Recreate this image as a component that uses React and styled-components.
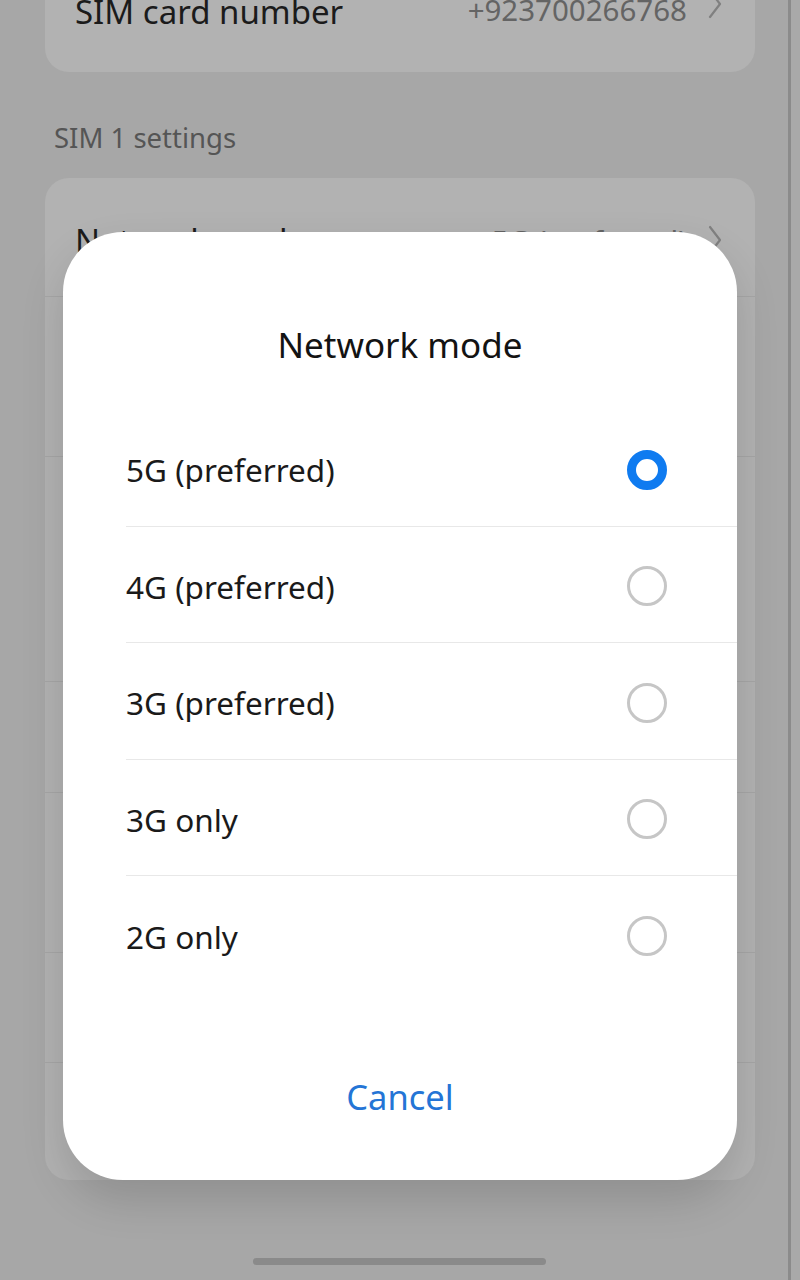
import React from 'react';
import styled, { createGlobalStyle } from 'styled-components';

const GlobalStyle = createGlobalStyle`
  html, body {
    margin: 0;
    padding: 0;
    background: #a7a7a7;
  }
  body {
    font-family: "Noto Sans", "Open Sans", sans-serif;
  }
`;

const Screen = styled.div`
  position: relative;
  width: 800px;
  height: 1280px;
  overflow: hidden;
  background: #a7a7a7;
  display: flex;
`;

const Content = styled.div`
  width: 788px;
  padding: 0 33px 0 45px;
  box-sizing: border-box;
  display: flex;
  flex-direction: column;
  margin-top: -48px;
`;

const ScrollTrack = styled.div`
  width: 3px;
  background: #8b8b8b;
`;

const ScrollEdge = styled.div`
  flex: 1;
  background: #a9a9a9;
`;

const Card = styled.div`
  background: #b2b2b2;
  border-radius: 24px;
  overflow: hidden;
`;

const Row = styled.div`
  height: ${props => props.height}px;
  display: flex;
  align-items: ${props => props.align || 'center'};
  padding: ${props => props.pad || '0'} 32px 0 30px;
  box-sizing: border-box;
  border-bottom: ${props => props.last ? 'none' : '1px solid #a6a6a6'};
`;

const RowLabel = styled.div`
  flex: 1;
  font-size: 33px;
  color: #1b1b1b;
  white-space: nowrap;
`;

const RowValue = styled.div`
  font-size: 29.5px;
  color: #646464;
  white-space: nowrap;
`;

const Chevron = styled.svg`
  width: 16px;
  height: 30px;
  margin-left: 20px;
  flex-shrink: 0;
`;

const SectionTitle = styled.div`
  font-size: 27.5px;
  color: #555;
  padding: 47px 0 22px 9px;
`;

const Backdrop = styled.div`
  position: absolute;
  inset: 0;
`;

const Dialog = styled.div`
  position: absolute;
  left: 63px;
  top: 232px;
  width: 674px;
  height: 948px;
  background: #fff;
  border-radius: 60px;
  box-shadow: 0 20px 44px rgba(0, 0, 0, 0.14);
  display: flex;
  flex-direction: column;
`;

const DialogTitle = styled.div`
  font-size: 35px;
  color: #131313;
  text-align: center;
  padding-top: 89px;
  height: 178px;
  box-sizing: border-box;
`;

const OptionList = styled.div`
  display: flex;
  flex-direction: column;
  padding-left: 63px;
`;

const Option = styled.div`
  height: 116.5px;
  display: flex;
  align-items: center;
  padding: 4px 70px 0 0;
  box-sizing: border-box;
  border-bottom: ${props => props.last ? 'none' : '1px solid #e8e8e8'};
`;

const OptionLabel = styled.div`
  flex: 1;
  font-size: 31.5px;
  color: #1a1a1a;
`;

const Radio = styled.div`
  width: 40px;
  height: 40px;
  box-sizing: border-box;
  border-radius: 50%;
  border: ${props => props.checked ? '9px solid #0f7bf0' : '3px solid #c6c6c6'};
  background: #fff;
`;

const CancelButton = styled.div`
  margin-top: auto;
  margin-bottom: 60px;
  text-align: center;
  font-size: 34.5px;
  color: #2475d6;
`;

const HomeBar = styled.div`
  position: absolute;
  left: 253px;
  bottom: 15px;
  width: 293px;
  height: 7px;
  border-radius: 4px;
  background: #8a8a8a;
`;

const options = ['5G (preferred)', '4G (preferred)', '3G (preferred)', '3G only', '2G only'];

const simRows = [
  { label: 'Network mode', value: '5G (preferred)', height: 119 },
  { label: 'Preferred network for calls', height: 160 },
  { label: 'Data roaming', height: 225 },
  { label: 'Access point names', height: 111 },
  { label: 'Enhanced 4G LTE mode', height: 160 },
  { label: 'VoWiFi', height: 110 },
  { label: 'Carrier settings', height: 117, last: true },
];

const ChevronIcon = () => (
  <Chevron viewBox="0 0 16 30">
    <path d="M3 2 L13 15 L3 28" fill="none" stroke="#808080" strokeWidth="2.2" strokeLinecap="round" strokeLinejoin="round" />
  </Chevron>
);

export default function App() {
  return (
    <>
      <GlobalStyle />
      <Screen>
        <Content>
          <Card>
            <Row height={120} align="flex-start" pad="37px" last>
              <RowLabel>SIM card number</RowLabel>
              <RowValue>+923700266768</RowValue>
              <ChevronIcon />
            </Row>
          </Card>
          <SectionTitle>SIM 1 settings</SectionTitle>
          <Card>
            {simRows.map(row => (
              <Row key={row.label} height={row.height} last={row.last} pad={row.value ? '6px' : '0'}>
                <RowLabel>{row.label}</RowLabel>
                {row.value && <RowValue>{row.value}</RowValue>}
                <ChevronIcon />
              </Row>
            ))}
          </Card>
        </Content>
        <ScrollTrack />
        <ScrollEdge />
        <Backdrop>
          <Dialog>
            <DialogTitle>Network mode</DialogTitle>
            <OptionList>
              {options.map((opt, i) => (
                <Option key={opt} last={i === options.length - 1}>
                  <OptionLabel>{opt}</OptionLabel>
                  <Radio checked={i === 0} />
                </Option>
              ))}
            </OptionList>
            <CancelButton>Cancel</CancelButton>
          </Dialog>
          <HomeBar />
        </Backdrop>
      </Screen>
    </>
  );
}
